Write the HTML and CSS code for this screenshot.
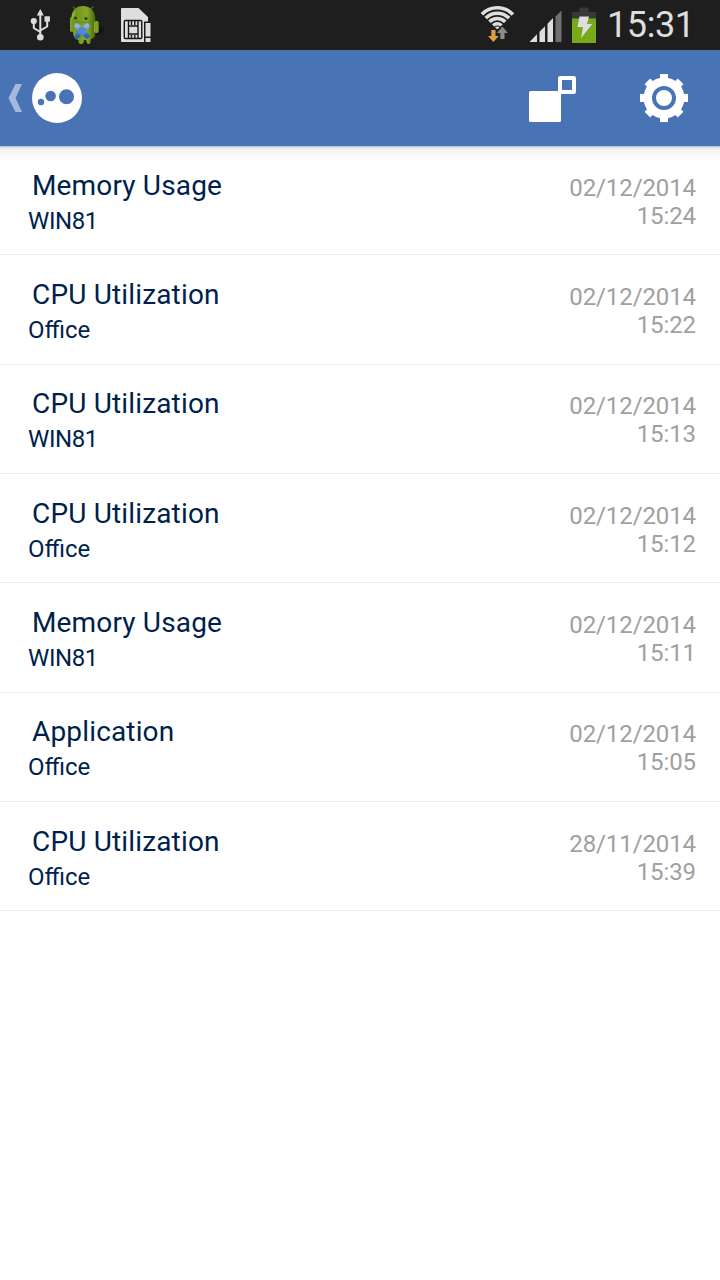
FILE: index.html
```html
<!DOCTYPE html>
<html lang="en">
<head>
<meta charset="utf-8">
<title>Alerts</title>
<link rel="stylesheet" href="styles.css">
</head>
<body>
<header class="status-bar">
  <div class="status-group notifications">
    <svg width="22" height="50" viewBox="30 0 22 50" fill="none" stroke="#dedede" stroke-width="2">
      <path d="M40.300 15V36M33.800 22v6l6.500 4M47.200 20v6.500l-6.900 4"/>
      <g fill="#dedede" stroke="none"><path d="M40.300 9l3.500 6.500h-7z"/><circle cx="33.800" cy="21" r="3.100"/><rect x="44.500" y="16.300" width="5.400" height="5.400"/><circle cx="40.300" cy="37.300" r="3.300"/></g>
    </svg>
    <svg class="droid" width="38" height="50" viewBox="68 0 38 50">
      <defs>
        <linearGradient id="droid"><stop offset="0" stop-color="#9fbd4c"/><stop offset=".2" stop-color="#74951c"/><stop offset=".65" stop-color="#86a82c"/><stop offset="1" stop-color="#486907"/></linearGradient>
        <linearGradient id="cross" x2="0" y2="1"><stop stop-color="#8db7ea"/><stop offset="1" stop-color="#2862bd"/></linearGradient>
        <radialGradient id="shade"><stop stop-color="#080808"/><stop offset="1" stop-color="#080808" stop-opacity="0"/></radialGradient>
      </defs>
      <ellipse cx="98" cy="30" rx="8" ry="6" fill="url(#shade)"/>
      <g fill="url(#droid)">
        <path d="M71.500 21C70.500 10.500 76 6 83 6s13 5 12.200 15z"/>
        <path d="M71.500 20h23.700v14q0 4-4.500 5v3q-1 3-3.500 1.500L86 40h-2l-.5 3q-3 2.500-5-.5V40q-4-.5-5-5z"/>
        <rect x="94" y="21" width="5" height="12" rx="2"/><rect x="70" y="17" width="3.500" height="15" rx="1.700"/>
      </g>
      <path d="M75 9l-2-2.500M91 9l2.500-2.500" stroke="#52691b" stroke-width="1.300"/>
      <path d="M73 21.500q10 2 21 0" fill="none" stroke="#5e7c18" stroke-width=".7"/>
      <circle cx="75.500" cy="18" r="1.500" fill="#293a0b"/><circle cx="86" cy="18.500" r="1.500" fill="#293a0b"/>
      <path d="M77 26l10 10M87 26L77 36" stroke="url(#cross)" stroke-width="5" stroke-linecap="round"/>
      <circle cx="82" cy="31" r="4.200" fill="#5487d0"/>
    </svg>
    <svg class="sim" width="34" height="50" viewBox="119 0 34 50">
      <path d="M122 8h16.500l9.500 9v5h-4v20h-22q-1 0-1-1V9q0-1 1-1z" fill="#dedede"/>
      <rect x="124.300" y="20.500" width="17.500" height="18" rx="1" fill="#dedede" stroke="#171717" stroke-width="1.400"/>
      <path d="M128.500 20v18.500M138 20v18.500M128.500 26H138M128.500 34H138M131.500 20v5M134.800 20v5M131.500 35v4M134.800 35v4" stroke="#171717" stroke-width="1.400"/>
      <rect x="144.300" y="21.500" width="7.500" height="21" fill="#1d1d1d"/>
      <rect x="145.500" y="23" width="5" height="13.500" fill="#dedede"/><rect x="145.500" y="38" width="5" height="4" fill="#dedede"/>
    </svg>
  </div>
  <div class="status-group indicators">
    <svg class="wifi" width="36" height="50" viewBox="479 0 36 50">
      <defs><clipPath id="fan"><path d="M497.300 29.500L478 10.500V0h39v10.500z"/></clipPath></defs>
      <g clip-path="url(#fan)" fill="none" stroke="#dedede" stroke-width="3.600">
        <circle cx="497.300" cy="29.500" r="21.700"/><circle cx="497.300" cy="29.500" r="16.300"/><circle cx="497.300" cy="29.500" r="11"/><circle cx="497.300" cy="29.500" r="5.700"/><circle cx="497.300" cy="29.500" r="1.200"/>
      </g>
      <path d="M491.300 30h4.200v6h3.300l-5.400 6-5.400-6h3.300z" fill="#dda043"/>
      <path d="M500.300 39h4.200v-6h3.300l-5.400-6.500-5.400 6.500h3.300z" fill="#8b8b8b"/>
    </svg>
    <svg class="signal" width="34" height="50" viewBox="529 0 34 50">
      <path d="M529.500 42l7.500-7.700V42zM539.500 31.800l5.500-5.600V42h-5.500zM547.500 23.700l5.500-5.600V42h-5.500z" fill="#dedede"/>
      <path d="M555.500 16.500l6-6V42h-6z" fill="#707070"/>
    </svg>
    <svg class="battery" width="24" height="50" viewBox="572 0 24 50">
      <path d="M579.500 7.500h9V12h7.500v7h-24v-7h7.500z" fill="#393939"/>
      <path d="M572 18.500h24V43h-24z" fill="#76aa17"/>
      <path d="M579.500 16.500h9.500l-2 7.500h5.300l-11.300 14 2-11h-5.500z" fill="#dedede"/>
    </svg>
    <time class="clock">15:31</time>
  </div>
</header>
<nav class="action-bar">
  <svg class="back" width="14" height="96" viewBox="8 50 14 96"><path d="M15.500 84h6.500l-6.500 14 6.500 14h-6.500L8.500 98z" fill="#a5b9da"/></svg>
  <svg class="logo" width="50" height="96" viewBox="32 50 50 96"><circle cx="57" cy="98" r="25" fill="#fff"/><g fill="#4873b5"><circle cx="41" cy="102" r="3.200"/><circle cx="50.600" cy="96" r="5.300"/><circle cx="66.500" cy="96.700" r="7.500"/></g></svg>
  <svg class="windows" width="48" height="96" viewBox="529 50 48 96"><rect x="529" y="91" width="32" height="31" rx="1.500" fill="#fff"/><rect x="560" y="78" width="14" height="14" rx=".3" fill="#4873b5" stroke="#fff" stroke-width="4" stroke-linejoin="round"/></svg>
  <svg class="settings" width="48" height="96" viewBox="640 50 48 96">
    <g fill="#fff"><circle cx="664" cy="98" r="20.500"/><rect x="660" y="74" width="8" height="48"/><rect x="640" y="94" width="48" height="8"/><rect x="660" y="74.500" width="8" height="47" transform="rotate(45 664 98)"/><rect x="660" y="74.500" width="8" height="47" transform="rotate(-45 664 98)"/></g>
    <circle cx="664" cy="98" r="10" fill="#fff" stroke="#4873b5" stroke-width="4"/>
  </svg>
</nav>
<main class="alerts">
  <article class="alert"><div class="info"><h2 class="name">Memory Usage</h2><p class="host computer">WIN81</p></div><div class="when"><div>02/12/2014</div><div>15:24</div></div></article>
  <article class="alert"><div class="info"><h2 class="name">CPU Utilization</h2><p class="host">Office</p></div><div class="when"><div>02/12/2014</div><div>15:22</div></div></article>
  <article class="alert"><div class="info"><h2 class="name">CPU Utilization</h2><p class="host computer">WIN81</p></div><div class="when"><div>02/12/2014</div><div>15:13</div></div></article>
  <article class="alert"><div class="info"><h2 class="name">CPU Utilization</h2><p class="host">Office</p></div><div class="when"><div>02/12/2014</div><div>15:12</div></div></article>
  <article class="alert"><div class="info"><h2 class="name">Memory Usage</h2><p class="host computer">WIN81</p></div><div class="when"><div>02/12/2014</div><div>15:11</div></div></article>
  <article class="alert"><div class="info"><h2 class="name">Application</h2><p class="host">Office</p></div><div class="when"><div>02/12/2014</div><div>15:05</div></div></article>
  <article class="alert"><div class="info"><h2 class="name">CPU Utilization</h2><p class="host">Office</p></div><div class="when"><div>28/11/2014</div><div>15:39</div></div></article>
</main>
</body>
</html>
```
FILE: styles.css
```css
* { box-sizing: border-box; }
body {
  margin: 0;
  min-height: 1280px;
  display: flex;
  flex-direction: column;
  background: #fff;
  font-family: Roboto, "Liberation Sans", sans-serif;
}
svg { display: block; flex: none; }
.status-bar {
  height: 50px;
  display: flex;
  justify-content: space-between;
  padding: 0 25px 0 30px;
  background: #1e1e1e;
}
.status-group { display: flex; }
.droid { margin-left: 16px; }
.sim { margin-left: 13px; }
.signal { margin-left: 14px; }
.battery { margin-left: 9px; }
.clock {
  width: 88px;
  margin-left: 11px;
  font-size: 36px;
  line-height: 50px;
  letter-spacing: -0.4px;
  color: #dedede;
  white-space: nowrap;
}
.action-bar {
  height: 96px;
  display: flex;
  padding: 0 32px 0 8px;
  background: #4873b5;
}
.logo { margin-left: 10px; }
.windows { margin-left: auto; }
.settings { margin-left: 63px; }
.alerts {
  flex: 1;
  background: linear-gradient(#b3b3b3 0, #d9d9d9 1px, #f0f0f0 3px, #fbfbfb 9px, #fff 18px);
}
.alert {
  height: 109.33px;
  display: flex;
  justify-content: space-between;
  padding: 0 24px 0 28px;
  border-bottom: 1px solid #ececec;
}
.info { padding-top: 22.6px; color: #001f4d; }
.name {
  margin: 0;
  padding-left: 4px;
  font-size: 28px;
  font-weight: 400;
  line-height: 34px;
  letter-spacing: 0.16px;
}
.host {
  margin: 0;
  font-size: 24px;
  line-height: 36px;
}
.computer { letter-spacing: -0.4px; }
.when {
  padding-top: 27.6px;
  font-size: 24px;
  line-height: 28px;
  letter-spacing: -0.1px;
  text-align: right;
  color: #a0a0a0;
}
```
